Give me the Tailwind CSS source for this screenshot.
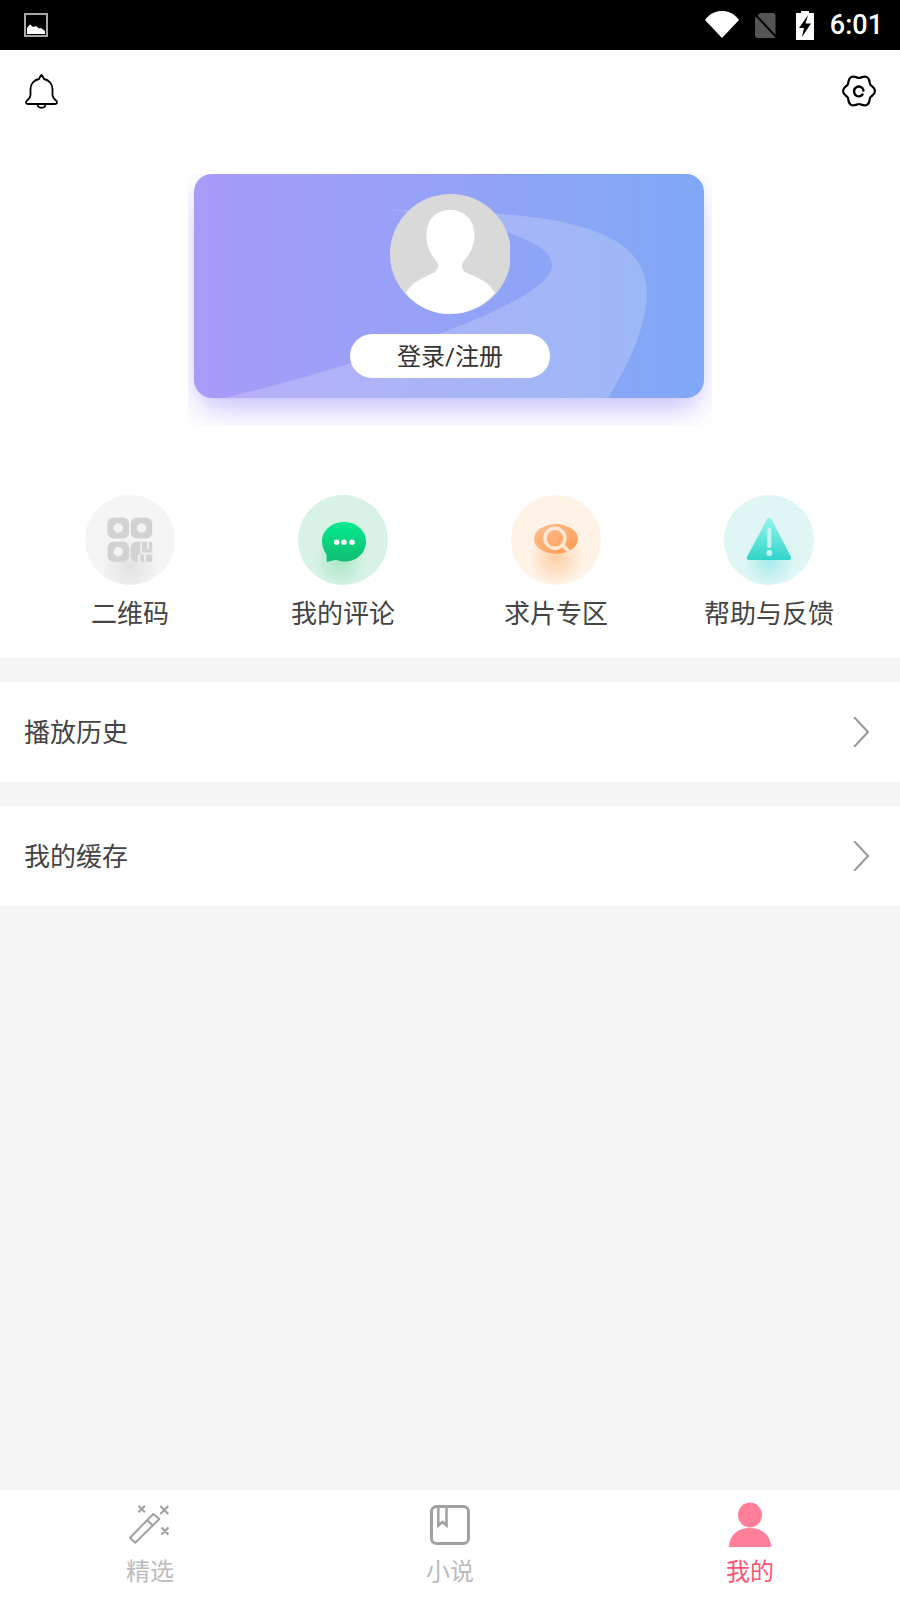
<!DOCTYPE html>
<html lang="zh-CN">
<head>
    <meta charset="UTF-8">
    <meta name="viewport" content="width=device-width, initial-scale=1.0">
    <title>我的</title>
    <script src="https://cdn.jsdelivr.net/npm/@tailwindcss/browser@4"></script>
</head>
<body class="bg-white">
<div class="w-[900px] h-[1600px] flex flex-col overflow-hidden font-['Roboto','Noto_Sans_CJK_SC',sans-serif]">

    <!-- status bar -->
    <div class="h-[50px] shrink-0 bg-black flex items-center justify-between pl-[24px] pr-[17px]">
        <svg width="24" height="24" viewBox="0 0 24 24">
            <rect x="1" y="1" width="22" height="22" fill="none" stroke="#a8a8a8" stroke-width="2"/>
            <path d="M3 21 V15 L6 11.5 L9 14 L12 13 L15 15.5 L17 15 L21 18 V21 Z" fill="#fff"/>
        </svg>
        <div class="flex items-center">
            <svg width="36" height="30" viewBox="0 0 36 30" class="mr-[12px]">
                <path d="M1 10 C6 3 12 1 18 1 C24 1 30 3 35 10 L18 28 Z" fill="#fff"/>
            </svg>
            <svg width="28" height="30" viewBox="0 0 28 30" class="mr-[16px]">
                <path d="M8 3 H21 C22.500 3 23.500 4 23.500 5.500 V28 H5.500 C4 28 3 27 3 25.500 V8 Z" fill="#555"/>
                <path d="M1 2 L27 30" stroke="#000" stroke-width="2"/>
            </svg>
            <svg width="18" height="29" viewBox="0 0 18 29" class="mr-[16px]">
                <path d="M5 0 H13 V2 H18 V29 H0 V2 H5 Z" fill="#fff"/>
                <path d="M12 4 L3 17 H8 L6 26 L15 12.500 H9.500 Z" fill="#000"/>
            </svg>
            <span class="text-[27px] leading-none font-medium text-white">6:01</span>
        </div>
    </div>

    <!-- top bar -->
    <div class="h-[82px] shrink-0 flex items-center justify-between pl-[24px] pr-[23px]">
        <svg width="36" height="36" viewBox="0 0 36 36" fill="none" stroke="#000" stroke-width="1.800" stroke-linejoin="round">
            <path d="M17.500 2 C16 3.500 15.500 5 15 6 C10 7 6.500 11 6.500 16 V22 C6.500 25 4 26.500 2.500 28 C1.500 29.500 2 31 4 31 H31 C33 31 33.500 29.500 32.500 28 C31 26.500 28.500 25 28.500 22 V16 C28.500 11 25 7 20 6 C19.500 5 19 3.500 17.500 2 Z"/>
            <path d="M13.500 31 C13.500 36 21.500 36 21.500 31"/>
        </svg>
        <svg width="36" height="36" viewBox="-18 -18 36 36" fill="none" stroke="#000" stroke-width="2.200">
            <path d="M16 0 C16 3.500 12.260 4.770 11.260 6.500 C10.260 8.230 11.030 12.110 8 13.860 C4.970 15.610 2 13 0 13 C-2 13 -4.970 15.610 -8 13.860 C-11.030 12.110 -10.260 8.230 -11.260 6.500 C-12.260 4.770 -16 3.500 -16 0 C-16 -3.500 -12.260 -4.770 -11.260 -6.500 C-10.260 -8.230 -11.030 -12.110 -8 -13.860 C-4.970 -15.610 -2 -13 0 -13 C2 -13 4.970 -15.610 8 -13.860 C11.030 -12.110 10.260 -8.230 11.260 -6.500 C12.260 -4.770 16 -3.500 16 0 Z"/>
            <path d="M4.500 -0.500 C4 -4 0 -5.500 -3 -3.500 C-6 -1.500 -5.500 3.500 -2 5 C0 5.800 2.500 5 3.500 3.500" stroke-linecap="round" stroke-width="2.400"/>
        </svg>
    </div>

    <!-- profile card -->
    <div class="mt-[42px] w-[524px] mx-auto shrink-0 overflow-hidden pl-[6px] pr-[8px] pb-[28px]">
        <div class="relative w-[510px] h-[224px] rounded-[18px] bg-linear-to-r from-[#a79bf8] to-[#7fa8f6] shadow-[0_16px_30px_-6px_rgba(120,105,245,0.42),0_0_16px_rgba(120,105,245,0.06)]">
            <svg class="absolute inset-0 rounded-[18px]" width="510" height="224" viewBox="0 0 510 224">
                <path d="M30 224 C170 190 358 130 358 91 C358 65 280 45 197 36 C320 38 453 40 453 119 C453 150 435 190 414 224 Z" fill="#fff" fill-opacity="0.2"/>
            </svg>
            <div class="relative flex flex-col items-center pt-[20px] pl-[2px]">
                <svg width="120" height="120" viewBox="0 0 120 120">
                    <ellipse cx="60.500" cy="60" rx="60.500" ry="60" fill="#d9d9d9"/>
                    <path d="M60 16 C46 16 36.500 25 36.500 42 C36.500 52 41 61 46 67 C49 70 49 75 45 78 C35 83 21 88 16 99 C26 112 42 120 60 120 C78 120 95 111 105 99 C100 88 86 83 75 78 C71 75 71 70 74 67 C79 61 84.500 52 84.500 42 C84.500 25 74 16 60 16 Z" fill="#fff"/>
                </svg>
                <div class="mt-[20px] w-[200px] h-[44px] pt-[1px] rounded-full bg-white flex items-center justify-center text-[24px] text-[#333] leading-none">登录/注册</div>
            </div>
        </div>
    </div>

    <!-- shortcuts -->
    <div class="mt-[69px] shrink-0 grid grid-cols-4 pl-[23px] pr-[25px] pb-[26px] text-[26px] leading-[36px] text-[#444]">
        <div class="flex flex-col items-center gap-[11px]">
            <svg width="90" height="90" viewBox="0 0 90 90">
                <defs><radialGradient id="glowGray" gradientUnits="userSpaceOnUse" cx="45" cy="72" r="30"><stop offset="0" stop-color="#e2e2e2"/><stop offset="1" stop-color="#f5f5f5"/></radialGradient></defs>
                <circle cx="45" cy="45" r="45" fill="url(#glowGray)"/>
                <rect x="22.500" y="22.500" width="21.500" height="21" rx="6" fill="#d2d2d2"/>
                <rect x="45.700" y="22.500" width="21.500" height="21" rx="6" fill="#d2d2d2"/>
                <rect x="22.500" y="46.700" width="21.500" height="20" rx="6" fill="#d2d2d2"/>
                <path d="M52 46.700 H67.200 V66.700 H52 C48 66.700 45.700 64 45.700 60 V53 C45.700 49 48 46.700 52 46.700 Z" fill="#d2d2d2"/>
                <circle cx="33.300" cy="33" r="4.700" fill="#f3f3f3"/>
                <circle cx="56.500" cy="33" r="4.700" fill="#f3f3f3"/>
                <circle cx="33.300" cy="56.700" r="4.700" fill="#f3f3f3"/>
                <path d="M55 46.700 H57 V57.500 H67.200 V59.500 H53 V66.700 H55.500 V59.500 M59 59.500 H61 V66.700 H59 Z M62 46.700 H64 V54 H62 Z" fill="#efefef"/>
            </svg>
            <span class="pl-[1px]">二维码</span>
        </div>
        <div class="flex flex-col items-center gap-[11px]">
            <svg width="90" height="90" viewBox="0 0 90 90">
                <defs>
                    <radialGradient id="glowGreen" gradientUnits="userSpaceOnUse" cx="42" cy="66" r="26"><stop offset="0" stop-color="#a8e6c4"/><stop offset="1" stop-color="#d8f3e6"/></radialGradient>
                    <linearGradient id="fillGreen" x1="0" y1="0" x2="0" y2="1"><stop offset="0" stop-color="#05ea8e"/><stop offset="1" stop-color="#0fbd72"/></linearGradient>
                </defs>
                <circle cx="45" cy="45" r="45" fill="url(#glowGreen)"/>
                <path d="M46 27 C58.500 27 68 35.500 68 46.500 C68 58 58.500 66.500 47 66.500 C43.500 66.500 40.500 65.700 38 64.700 L30 66.700 C29 66.900 28.700 66.500 28.700 65.500 L28.500 59.500 C26 56 24 51.500 24 46.500 C24 35.500 33.500 27 46 27 Z" fill="url(#fillGreen)"/>
                <circle cx="38.700" cy="47.300" r="2.700" fill="#fff"/>
                <circle cx="46" cy="47.300" r="2.700" fill="#fff"/>
                <circle cx="54" cy="47.300" r="2.700" fill="#fff"/>
            </svg>
            <span class="pl-[1px]">我的评论</span>
        </div>
        <div class="flex flex-col items-center gap-[11px]">
            <svg width="90" height="90" viewBox="0 0 90 90">
                <defs>
                    <radialGradient id="glowOrange" gradientUnits="userSpaceOnUse" cx="45" cy="63" r="27"><stop offset="0" stop-color="#ffcfa6"/><stop offset="1" stop-color="#fff2e7"/></radialGradient>
                    <linearGradient id="fillOrange" x1="0" y1="0" x2="1" y2="1"><stop offset="0" stop-color="#ffbf92"/><stop offset="1" stop-color="#ff9a50"/></linearGradient>
                </defs>
                <circle cx="45" cy="45" r="45" fill="url(#glowOrange)"/>
                <ellipse cx="45" cy="44" rx="22" ry="15" fill="url(#fillOrange)"/>
                <circle cx="44" cy="43.300" r="10" fill="none" stroke="#ffe8d8" stroke-width="3.400"/>
                <path d="M52 50.500 L59 57.500" stroke="#ffe8d8" stroke-width="3.400" stroke-linecap="round"/>
            </svg>
            <span class="pl-[1px]">求片专区</span>
        </div>
        <div class="flex flex-col items-center gap-[11px]">
            <svg width="90" height="90" viewBox="0 0 90 90">
                <defs>
                    <radialGradient id="glowTeal" gradientUnits="userSpaceOnUse" cx="45" cy="66" r="26"><stop offset="0" stop-color="#a4ebe9"/><stop offset="1" stop-color="#e0f6f5"/></radialGradient>
                    <linearGradient id="fillTeal" x1="0" y1="0" x2="0" y2="1"><stop offset="0" stop-color="#97f5ee"/><stop offset="1" stop-color="#2fd4ca"/></linearGradient>
                </defs>
                <circle cx="45" cy="45" r="45" fill="url(#glowTeal)"/>
                <path d="M43 24 C44.200 22.200 46.400 22.200 47.500 24 L66.700 61.500 C67.700 63.500 66.800 65 64.700 65 H25.300 C23.200 65 22.300 63.500 23.300 61.500 Z" fill="url(#fillTeal)"/>
                <path d="M45.300 35 V51" stroke="#c4f6f2" stroke-width="4" stroke-linecap="round"/>
                <circle cx="45.300" cy="58" r="3" fill="#c4f6f2"/>
            </svg>
            <span class="pl-[1px]">帮助与反馈</span>
        </div>
    </div>

    <!-- list rows -->
    <div class="flex-1 bg-[#f5f5f5] pt-[24px] flex flex-col gap-[24px]">
        <div class="h-[100px] bg-white flex items-center justify-between pl-[24px] pr-[31px] text-[26px] text-[#444]">
            <span class="pt-[2px]">播放历史</span>
            <svg width="16" height="30" viewBox="0 0 16 30" fill="none" stroke="#999" stroke-width="2"><path d="M1 0 L15 15 L1 30"/></svg>
        </div>
        <div class="h-[100px] bg-white flex items-center justify-between pl-[24px] pr-[31px] text-[26px] text-[#444]">
            <span class="pt-[2px]">我的缓存</span>
            <svg width="16" height="30" viewBox="0 0 16 30" fill="none" stroke="#999" stroke-width="2"><path d="M1 0 L15 15 L1 30"/></svg>
        </div>
    </div>

    <!-- bottom nav -->
    <div class="h-[110px] shrink-0 bg-white grid grid-cols-3 text-[24px] leading-[32px] text-[#bbb]">
        <div class="flex flex-col items-center pt-[12px] gap-[6px]">
            <svg width="48" height="48" viewBox="0 0 48 48" fill="none" stroke="#a0a0a0" stroke-width="2">
                <path d="M4 35.700 L9.300 40.700 L33.300 17 L27.300 12 Z" stroke-linejoin="round"/>
                <path d="M21.300 18 L26.700 23.500"/>
                <path d="M12.500 3.800 L18.900 10.200 M18.900 3.800 L12.500 10.200 M34.300 4 L42.300 12 M42.300 4 L34.300 12 M35.500 25.500 L42.500 32.500 M42.500 25.500 L35.500 32.500"/>
            </svg>
            <span>精选</span>
        </div>
        <div class="flex flex-col items-center pt-[12px] gap-[6px]">
            <svg width="48" height="48" viewBox="0 0 48 48" fill="none" stroke="#a0a0a0">
                <rect x="5.500" y="4.500" width="37" height="37" rx="5" stroke-width="3"/>
                <path d="M12.300 5 V23.500 L16.500 20 L20.500 23.500 V5" stroke-width="2.500"/>
            </svg>
            <span>小说</span>
        </div>
        <div class="flex flex-col items-center pt-[12px] gap-[6px] text-[#ff5573]">
            <svg width="48" height="48" viewBox="0 0 48 48" fill="#ff7f9b">
                <ellipse cx="24" cy="13" rx="12" ry="12.500"/>
                <path d="M3 45 C3 33 12 26 24 26 C36 26 45 33 45 45 Z"/>
            </svg>
            <span>我的</span>
        </div>
    </div>
</div>
</body>
</html>
